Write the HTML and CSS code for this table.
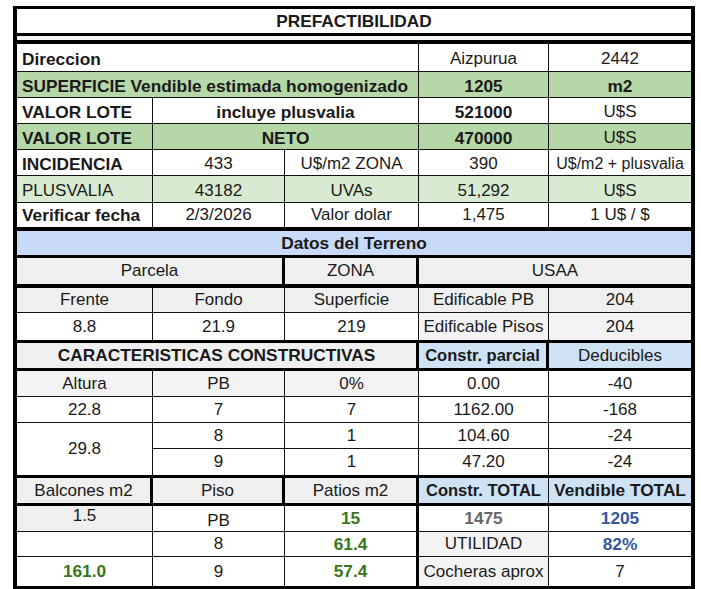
FILE: index.html
```html
<!DOCTYPE html>
<html lang="es">
<head>
<meta charset="utf-8">
<title>Prefactibilidad</title>
<link rel="stylesheet" href="styles.css">
</head>
<body>
<div class="sheet">
  <div class="row r3"><div class="c s5 b">PREFACTIBILIDAD</div></div>
  <div class="row r4"><div class="c s5 gap"></div></div>

  <div class="row lo"><div class="c s3 l b">Direccion</div><div class="c">Aizpurua</div><div class="c">2442</div></div>
  <div class="row lo g2"><div class="c s3 l b">SUPERFICIE Vendible estimada homogenizado</div><div class="c b">1205</div><div class="c b">m2</div></div>
  <div class="row lo"><div class="c l b">VALOR LOTE</div><div class="c s2 b">incluye plusvalia</div><div class="c b">521000</div><div class="c">U$S</div></div>
  <div class="row lo g2"><div class="c l b">VALOR LOTE</div><div class="c s2 b">NETO</div><div class="c b">470000</div><div class="c">U$S</div></div>
  <div class="row lo"><div class="c l b">INCIDENCIA</div><div class="c">433</div><div class="c">U$/m2 ZONA</div><div class="c">390</div><div class="c sm">U$/m2 + plusvalia</div></div>
  <div class="row lo g1"><div class="c l">PLUSVALIA</div><div class="c">43182</div><div class="c">UVAs</div><div class="c">51,292</div><div class="c">U$S</div></div>
  <div class="row r4"><div class="c l b">Verificar fecha</div><div class="c">2/3/2026</div><div class="c">Valor dolar</div><div class="c">1,475</div><div class="c">1 U$ / $</div></div>

  <div class="row r3 blue"><div class="c s5 b">Datos del Terreno</div></div>
  <div class="row r4 gray"><div class="c s2 tr">Parcela</div><div class="c tr">ZONA</div><div class="c s2">USAA</div></div>
  <div class="row gray"><div class="c">Frente</div><div class="c">Fondo</div><div class="c">Superficie</div><div class="c">Edificable PB</div><div class="c">204</div></div>
  <div class="row r3"><div class="c">8.8</div><div class="c">21.9</div><div class="c">219</div><div class="c gray2">Edificable Pisos</div><div class="c gray2">204</div></div>

  <div class="row r3 gray"><div class="c s3 b tr">CARACTERISTICAS CONSTRUCTIVAS</div><div class="c lb bs tr">Constr. parcial</div><div class="c lb">Deducibles</div></div>
  <div class="row"><div class="c gray2">Altura</div><div class="c gray2">PB</div><div class="c gray2">0%</div><div class="c">0.00</div><div class="c">-40</div></div>
  <div class="row"><div class="c">22.8</div><div class="c">7</div><div class="c">7</div><div class="c">1162.00</div><div class="c">-168</div></div>
  <div class="row"><div class="c span2 bot3">29.8</div><div class="c">8</div><div class="c">1</div><div class="c">104.60</div><div class="c">-24</div></div>
  <div class="row r3"><div class="c">9</div><div class="c">1</div><div class="c">47.20</div><div class="c">-24</div></div>

  <div class="row r3 gray"><div class="c tr">Balcones m2</div><div class="c tr">Piso</div><div class="c tr">Patios m2</div><div class="c lb bs">Constr. TOTAL</div><div class="c lb b">Vendible TOTAL</div></div>
  <div class="row"><div class="c gray up">1.5</div><div class="c down">PB</div><div class="c tr b green">15</div><div class="c b grey-t">1475</div><div class="c b blue-t">1205</div></div>
  <div class="row"><div class="c"></div><div class="c">8</div><div class="c tr b green">61.4</div><div class="c gray2">UTILIDAD</div><div class="c b blue-t">82%</div></div>
  <div class="row last"><div class="c b green">161.0</div><div class="c">9</div><div class="c tr b green">57.4</div><div class="c gray2">Cocheras aprox</div><div class="c">7</div></div>
</div>
</body>
</html>
```

FILE: styles.css
```css
html, body {
  margin: 0;
  padding: 0;
  background: #fff;
}

.sheet {
  margin: 6px 0 0 13px;
  width: 682px;
  box-sizing: border-box;
  border: 3px solid #000;
  border-left-width: 4px;
  border-right-width: 4px;
  display: grid;
  grid-template-columns: 136px 132px 134px 130px 142px;
  grid-template-rows: 27px 8px 28px 26px 26px 26px 26px 27px 28px 27px 30px 25px 30px 28px 26px 26px 26px 29px 28px 26px 25px 29px;
  font-family: "Liberation Sans", Arial, sans-serif;
  font-size: 17px;
  color: #1a1a1a;
}

.row {
  display: contents;
}

.c {
  box-sizing: border-box;
  border-right: 1px solid #111;
  border-bottom: 1px solid #111;
  display: flex;
  align-items: center;
  justify-content: center;
  white-space: nowrap;
  overflow: hidden;
  min-width: 0;
}

.c:last-child {
  border-right: 0;
}

.lo > .c { padding-top: 3px; }

.r3 > .c { border-bottom: 3px solid #000; }
.r4 > .c { border-bottom: 4px solid #000; }
.last > .c { border-bottom: 0; }
.bot3 { border-bottom: 3px solid #000; }
.tr { border-right: 3px solid #000; }

.s2 { grid-column: span 2; }
.s3 { grid-column: span 3; }
.s5 { grid-column: span 5; }
.span2 { grid-row: span 2; }

.l {
  justify-content: flex-start;
  padding-left: 5px;
}

.b {
  font-weight: bold;
  font-size: 17.3px;
}

.bs {
  font-weight: bold;
  font-size: 16.5px;
}

.sm { font-size: 16px; }

.gap { background: #f5f5f5; }

.g2 > .c { background: #b6d7a8; }
.g1 > .c { background: #d9ead3; }
.blue > .c { background: #c9daf8; }
.gray > .c, .c.gray { background: #efefef; }
.c.gray2 { background: #f3f3f3; }
.c.lb { background: #cfe2f3; }

.green { color: #38761d; }
.grey-t { color: #666; }
.blue-t { color: #34589e; }

.up { padding-bottom: 5px; }
.down { padding-top: 5px; }
```
